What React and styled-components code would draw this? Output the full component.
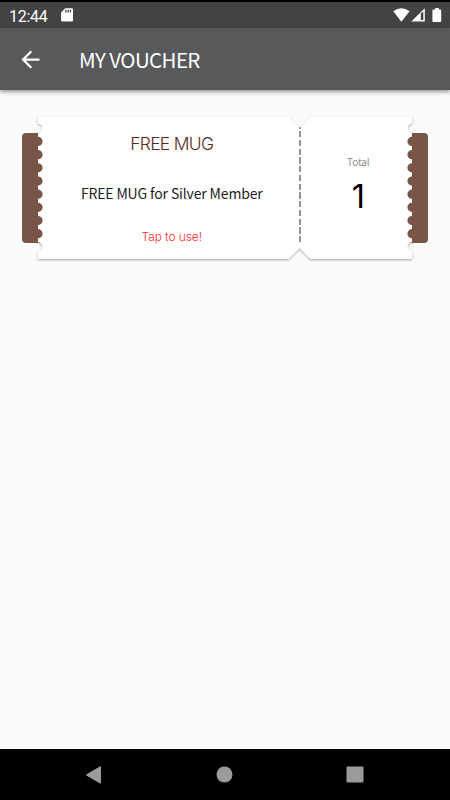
import styled, { createGlobalStyle } from "styled-components";

const GlobalStyle = createGlobalStyle`
  * {
    box-sizing: border-box;
  }
  body {
    margin: 0;
    background-color: #fafafa;
  }
`;

const StyledScreen = styled.div`
  width: 450px;
  height: 800px;
  display: flex;
  flex-direction: column;
  overflow: hidden;
  background-color: #fafafa;
  font-family: "Noto Sans CJK JP", "Noto Sans", sans-serif;
`;

const StyledStatusBar = styled.div`
  height: 28px;
  flex-shrink: 0;
  border-top: 2px solid #000;
  padding: 0 8px 0 9px;
  background-color: #434344;
  display: flex;
  align-items: center;
  justify-content: space-between;
  color: #fff;
`;

const StyledStatusGroup = styled.div`
  display: flex;
  align-items: center;
  gap: ${(props) => props.$gap};
  & svg {
    display: block;
  }
`;

const StyledClock = styled.span`
  font: 400 16px/26px Roboto, sans-serif;
  letter-spacing: -0.3px;
  padding-top: 3px;
`;

const StyledAppBar = styled.header`
  height: 61.5px;
  flex-shrink: 0;
  padding: 0 16.5px 0;
  background-color: #58595b;
  box-shadow: 0 2px 4px rgba(0, 0, 0, 0.4);
  display: flex;
  align-items: center;
  gap: 35.5px;
  color: #fff;
`;

const StyledBackButton = styled.button`
  display: flex;
  padding: 1px 0 0;
  background: none;
  border: none;
  color: inherit;
`;

const StyledTitle = styled.h1`
  margin: 0;
  padding-top: 1px;
  font-size: 20.5px;
  font-weight: 400;
  line-height: 30px;
  letter-spacing: -0.6px;
  white-space: nowrap;
`;

const StyledContent = styled.main`
  flex: 1;
  padding: 27.5px 22px 0;
`;

/* shadow, strip and paper share one grid cell, the paper on top */
const StyledVoucher = styled.div`
  display: grid;
  align-items: center;
  justify-items: center;
  & > * {
    grid-area: 1 / 1;
  }
`;

const StyledStrip = styled.div`
  position: relative;
  width: 100%;
  height: 109.5px;
  margin-bottom: 1px;
  border-radius: 4px;
  background-color: #795548;
`;

const StyledPaperShadow = styled.div`
  filter: drop-shadow(0 1.5px 1.2px rgba(0, 0, 0, 0.34));
`;

const StyledPaper = styled.div`
  width: 374px;
  height: 142.5px;
  display: flex;
  background-color: #fff;
  clip-path: path("${(props) => props.$outline}");
`;

const StyledDetails = styled.div`
  width: 260.5px;
  padding: 13px 0 0 7px;
  display: flex;
  flex-direction: column;
  align-items: center;
  white-space: nowrap;
`;

const StyledName = styled.span`
  font: 300 17.5px/28px Inter, sans-serif;
  letter-spacing: -0.7px;
  color: #5b2a1b;
`;

const StyledDescription = styled.span`
  margin-top: 23px;
  font-size: 14px;
  line-height: 24px;
  letter-spacing: -0.15px;
  color: #1c1c1c;
`;

const StyledAction = styled.span`
  margin-top: 21px;
  font: 300 12px/22px Inter, sans-serif;
  letter-spacing: -0.1px;
  color: #ff2a2a;
`;

const StyledPerforation = styled.div`
  width: 2px;
  height: 115.5px;
  margin-top: 10px;
  background: repeating-linear-gradient(
    to bottom,
    #929292 0 6.1px,
    transparent 6.1px 8.75px
  );
  background-position: 0 -4.6px;
  background-size: 100% 130px;
`;

const StyledCount = styled.div`
  flex: 1;
  padding: 36px 0 0 4px;
  display: flex;
  flex-direction: column;
  align-items: center;
`;

const StyledLabel = styled.span`
  font-size: 10px;
  line-height: 18px;
  letter-spacing: -0.15px;
  color: #8c8c8c;
`;

const StyledNumber = styled.span`
  margin-top: 4px;
  font: 400 32.5px/44px Inter, sans-serif;
  color: #000;
`;

const StyledNavBar = styled.nav`
  height: 51px;
  flex-shrink: 0;
  padding: 0 85px;
  background-color: #000;
  display: flex;
  align-items: center;
  justify-content: space-between;
  & svg {
    display: block;
    fill: #9b9b9b;
  }
`;

const WIDTH = 374;
const HEIGHT = 142;
const FOLD = 261.5;
const NOTCH = 11;
const BITE = 4.6;
const BITES = Array.from({ length: 10 }, (_, i) => 11.3 + i * 13.17);

const makeOutline = () => {
  const right = BITES.map(
    (y) => `V${y - BITE} A${BITE} ${BITE} 0 0 0 ${WIDTH} ${y + BITE}`
  ).join(" ");
  const left = [...BITES]
    .reverse()
    .map((y) => `V${y + BITE} A${BITE} ${BITE} 0 0 0 0 ${y - BITE}`)
    .join(" ");
  return [
    `M0 0 H${FOLD - NOTCH} L${FOLD} ${NOTCH - 0.5} L${FOLD + NOTCH} 0 H${WIDTH}`,
    right,
    `V${HEIGHT} H${FOLD + NOTCH} L${FOLD} ${HEIGHT - NOTCH} L${FOLD - NOTCH} ${HEIGHT} H0`,
    left,
    "Z",
  ].join(" ");
};

const outline = makeOutline();

const StatusBar = () => (
  <StyledStatusBar>
    <StyledStatusGroup $gap="14px">
      <StyledClock>12:44</StyledClock>
      <svg width="12" height="14" viewBox="0 0 12 14">
        <path
          fill="#fff"
          fillRule="evenodd"
          d="M4.3.3H10.8Q12 .3 12 1.5V12.3Q12 13.5 10.8 13.5H1.3Q.1 13.5 .1 12.3V4.5ZM4.2 1.8V4.5H5.5V1.8ZM6.5 1.8V4.5H7.8V1.8ZM8.8 1.8V4.5H10.1V1.8Z"
        />
      </svg>
    </StyledStatusGroup>
    <StyledStatusGroup $gap="0">
      <svg width="49" height="16" viewBox="0 0 49 16" fill="#fff">
        <path d="M0.3 4.2Q8.3-1.6 16.5 4.2L8.4 14.7Z" />
        <path
          fillRule="evenodd"
          d="M18.3 14.6L31.8 1.2V14.6ZM27.8 6.5V13H30.3V4.5Z"
        />
        <path d="M42.2 1H45.8V2.4H47.4Q48.2 2.4 48.2 3.2V14.2Q48.2 15 47.4 15H40.2Q39.4 15 39.4 14.2V3.2Q39.4 2.4 40.2 2.4H42.2Z" />
      </svg>
    </StyledStatusGroup>
  </StyledStatusBar>
);

const AppBar = ({ title }) => (
  <StyledAppBar>
    <StyledBackButton aria-label="Back">
      <svg width="27" height="27" viewBox="0 0 24 24" fill="currentColor">
        <path d="M20 11H7.83l5.59-5.59L12 4l-8 8 8 8 1.41-1.41L7.83 13H20v-2z" />
      </svg>
    </StyledBackButton>
    <StyledTitle>{title}</StyledTitle>
  </StyledAppBar>
);

const Voucher = ({ name, description, total }) => (
  <StyledVoucher>
    <StyledPaperShadow>
      <StyledPaper $outline={outline} />
    </StyledPaperShadow>
    <StyledStrip />
    <StyledPaper $outline={outline}>
      <StyledDetails>
        <StyledName>{name}</StyledName>
        <StyledDescription>{description}</StyledDescription>
        <StyledAction>Tap to use!</StyledAction>
      </StyledDetails>
      <StyledPerforation />
      <StyledCount>
        <StyledLabel>Total</StyledLabel>
        <StyledNumber>{total}</StyledNumber>
      </StyledCount>
    </StyledPaper>
  </StyledVoucher>
);

const NavBar = () => (
  <StyledNavBar>
    <svg width="17" height="18" viewBox="0 0 17 18">
      <path d="M16 .8V17.2Q16 18 15.2 17.5L1.3 9.6Q.5 9 1.3 8.4L15.2.3Q16 0 16 .8Z" />
    </svg>
    <svg width="17" height="17" viewBox="0 0 17 17">
      <circle cx="8.5" cy="8.5" r="8" />
    </svg>
    <svg width="19" height="17" viewBox="0 0 19 17">
      <rect x="0.5" y="0.5" width="17" height="16" rx="1" />
    </svg>
  </StyledNavBar>
);

const App = () => {
  return (
    <>
      <GlobalStyle />
      <StyledScreen>
        <StatusBar />
        <AppBar title="MY VOUCHER" />
        <StyledContent>
          <Voucher
            name="FREE MUG"
            description="FREE MUG for Silver Member"
            total={1}
          />
        </StyledContent>
        <NavBar />
      </StyledScreen>
    </>
  );
};

export default App;
